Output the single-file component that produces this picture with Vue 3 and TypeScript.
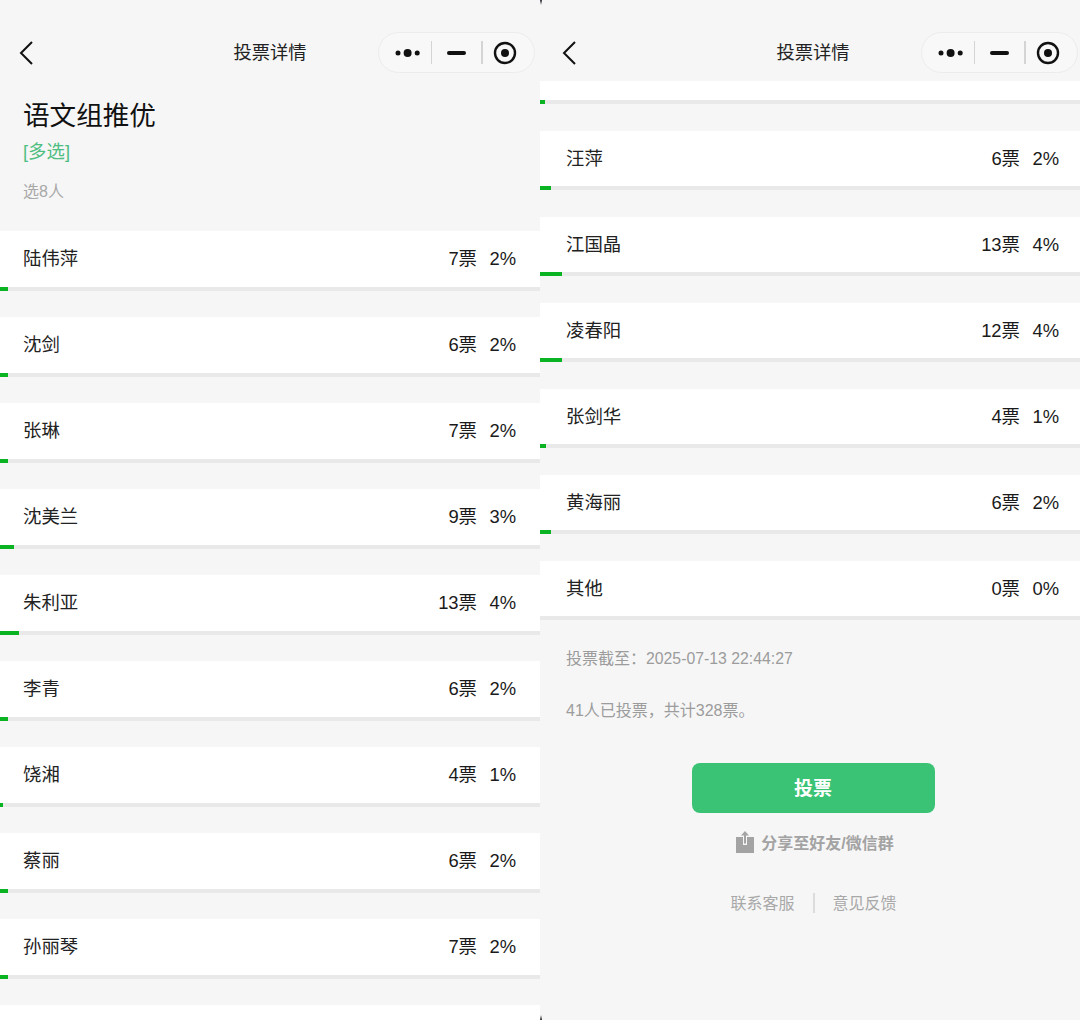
<script setup lang="ts">
interface Row { name: string; votes: number; pct: number; bar: number }
const leftRows: Row[] = [
  { name: '陆伟萍', votes: 7, pct: 2, bar: 8 },
  { name: '沈剑', votes: 6, pct: 2, bar: 8 },
  { name: '张琳', votes: 7, pct: 2, bar: 8 },
  { name: '沈美兰', votes: 9, pct: 3, bar: 14 },
  { name: '朱利亚', votes: 13, pct: 4, bar: 19 },
  { name: '李青', votes: 6, pct: 2, bar: 8 },
  { name: '饶湘', votes: 4, pct: 1, bar: 3 },
  { name: '蔡丽', votes: 6, pct: 2, bar: 8 },
  { name: '孙丽琴', votes: 7, pct: 2, bar: 8 },
]
const rightRows: Row[] = [
  { name: '汪萍', votes: 6, pct: 2, bar: 11 },
  { name: '江国晶', votes: 13, pct: 4, bar: 22 },
  { name: '凌春阳', votes: 12, pct: 4, bar: 22 },
  { name: '张剑华', votes: 4, pct: 1, bar: 6 },
  { name: '黄海丽', votes: 6, pct: 2, bar: 11 },
  { name: '其他', votes: 0, pct: 0, bar: 0 },
]
</script>

<template>
  <div class="page">
    <section class="panel">
      <header class="nav">
        <svg class="back" width="16" height="26" viewBox="0 0 16 26"><path d="M14 2 L3 13 L14 24" fill="none" stroke="#111" stroke-width="2" /></svg>
        <span class="nav-title">投票详情</span>
        <div class="capsule">
          <svg class="cap-dots" width="26" height="12" viewBox="0 0 26 12"><circle cx="3" cy="6" r="2.5" fill="#111" /><circle cx="12.6" cy="6" r="4" fill="#111" /><circle cx="22.2" cy="6" r="2.5" fill="#111" /></svg>
          <i class="cap-sep"></i>
          <span class="cap-minus"></span>
          <i class="cap-sep"></i>
          <svg class="cap-ring" width="24" height="24" viewBox="0 0 24 24"><circle cx="12" cy="12" r="10" fill="none" stroke="#111" stroke-width="2.4" /><circle cx="12" cy="12" r="4" fill="#111" /></svg>
        </div>
      </header>
      <div class="intro">
        <h1 class="title">语文组推优</h1>
        <p class="type">[多选]</p>
        <p class="hint">选8人</p>
      </div>
      <div class="list">
        <div v-for="r in leftRows" :key="r.name" class="item">
          <div class="row">
            <span class="name">{{ r.name }}</span>
            <span class="votes">{{ r.votes }}票</span>
            <span class="pct">{{ r.pct }}%</span>
          </div>
          <div class="track"><div class="fill" :style="{ width: r.bar + 'px' }"></div></div>
        </div>
        <div class="item"><div class="row"></div></div>
      </div>
    </section>

    <section class="panel right">
      <header class="nav">
        <svg class="back" width="16" height="26" viewBox="0 0 16 26"><path d="M14 2 L3 13 L14 24" fill="none" stroke="#111" stroke-width="2" /></svg>
        <span class="nav-title">投票详情</span>
        <div class="capsule">
          <svg class="cap-dots" width="26" height="12" viewBox="0 0 26 12"><circle cx="3" cy="6" r="2.5" fill="#111" /><circle cx="12.6" cy="6" r="4" fill="#111" /><circle cx="22.2" cy="6" r="2.5" fill="#111" /></svg>
          <i class="cap-sep"></i>
          <span class="cap-minus"></span>
          <i class="cap-sep"></i>
          <svg class="cap-ring" width="24" height="24" viewBox="0 0 24 24"><circle cx="12" cy="12" r="10" fill="none" stroke="#111" stroke-width="2.4" /><circle cx="12" cy="12" r="4" fill="#111" /></svg>
        </div>
      </header>
      <div class="list">
        <div class="item">
          <div class="row stub"></div>
          <div class="track"><div class="fill" style="width: 5px"></div></div>
        </div>
        <div v-for="r in rightRows" :key="r.name" class="item">
          <div class="row">
            <span class="name">{{ r.name }}</span>
            <span class="votes">{{ r.votes }}票</span>
            <span class="pct">{{ r.pct }}%</span>
          </div>
          <div class="track"><div class="fill" :style="{ width: r.bar + 'px' }"></div></div>
        </div>
      </div>
      <div class="meta">
        <p>投票截至：<span class="date">2025-07-13 22:44:27</span></p>
        <p>41人已投票，共计328票。</p>
      </div>
      <button class="vote">投票</button>
      <div class="share">
        <svg width="18" height="22" viewBox="0 0 18 22"><path d="M0 6 H7 V14 H11 V6 H18 V22 H0 Z" fill="#a3a3a3" /><path d="M9 0 L13 4.5 H10 V12.5 H8 V4.5 H5 Z" fill="#a3a3a3" /></svg>
        <span>分享至好友/微信群</span>
      </div>
      <div class="links">
        <span>联系客服</span>
        <i class="link-sep"></i>
        <span>意见反馈</span>
      </div>
    </section>
    <i class="seam seam-top"></i>
    <i class="seam seam-bottom"></i>
  </div>
</template>

<style scoped>
.page {
  position: relative;
  display: flex;
  width: 1080px;
  height: 1020px;
  overflow: hidden;
  font-family: "Liberation Sans", "Noto Sans CJK SC", sans-serif;
  color: #1a1a1a;
}
.seam {
  position: absolute;
  width: 2px;
  background: #30303a;
}
.seam-top {
  left: 540px;
  top: 0;
  height: 5px;
  clip-path: polygon(0 0, 100% 0, 50% 100%);
}
.seam-bottom {
  left: 540px;
  bottom: 0;
  height: 5px;
  clip-path: polygon(50% 0, 100% 100%, 0 100%);
}
.panel {
  width: 540px;
  height: 1020px;
  flex: none;
  overflow: hidden;
  background: #f6f6f6;
  display: flex;
  flex-direction: column;
}
.nav {
  height: 81px;
  flex: none;
  position: relative;
  display: flex;
  align-items: center;
  justify-content: center;
  padding-top: 24px;
  box-sizing: border-box;
}
.right .nav {
  left: 3px;
}
.back {
  position: absolute;
  left: 18px;
  top: 40px;
}
.nav-title {
  font-size: 18.3px;
  line-height: 56px;
  color: #222;
}
.capsule {
  position: absolute;
  right: 5px;
  top: 32px;
  width: 157px;
  height: 41px;
  box-sizing: border-box;
  border: 1px solid #ececec;
  border-radius: 21px;
  background: #f8f8f8;
  display: flex;
  align-items: center;
  padding-left: 16px;
}
.cap-sep {
  width: 1.4px;
  height: 23px;
  background: #d4d4d4;
  flex: none;
}
.cap-dots {
  margin-right: 10px;
}
.cap-minus {
  width: 19px;
  height: 4px;
  border-radius: 2px;
  background: #111;
  margin: 0 15px;
}
.cap-ring {
  margin-left: 10.5px;
}
.intro {
  height: 150px;
  flex: none;
  box-sizing: border-box;
  padding: 15px 23px 0;
}
.title {
  margin: 0;
  font-size: 26.6px;
  font-weight: 400;
  line-height: 40px;
  color: #111;
}
.type {
  margin: 0;
  font-size: 18.4px;
  line-height: 32px;
  color: #4fbe82;
}
.hint {
  margin: 10px 0 0;
  font-size: 16px;
  line-height: 28px;
  color: #a8a8a8;
}
.list {
  display: flex;
  flex-direction: column;
  gap: 26px;
}
.right .list {
  gap: 27px;
}
.row {
  height: 56px;
  box-sizing: border-box;
  background: #fff;
  display: flex;
  align-items: baseline;
  padding: 16px 24px 0 23px;
  font-size: 18.4px;
  line-height: 24px;
}
.right .row {
  height: 55px;
  padding-left: 26px;
  padding-right: 21px;
}
.right .row.stub {
  height: 19px;
  padding: 0;
}
.name {
  flex: 1;
  color: #222;
}
.pct {
  width: 39px;
  text-align: right;
}
.track {
  height: 4px;
  background: #e9e9e9;
}
.fill {
  height: 100%;
  background: #09b321;
}
.meta {
  padding: 0 26px;
  font-size: 16px;
  color: #9c9c9c;
}
.date {
  font-size: 15.8px;
}
.meta p {
  margin: 0;
  line-height: 24px;
  padding-bottom: 2px;
  padding-top: 26px;
}
.meta p:first-child {
  padding-top: 27px;
}
.vote {
  display: block;
  width: 243px;
  height: 50px;
  margin: 38px auto 0;
  padding: 0 0 3px;
  position: relative;
  left: 3px;
  border: 0;
  border-radius: 8px;
  background: #3bc375;
  color: #fff;
  font-family: inherit;
  font-size: 19px;
  font-weight: 700;
}
.share {
  display: flex;
  align-items: center;
  justify-content: center;
  gap: 7px;
  margin-top: 17px;
  padding-left: 10px;
  font-size: 16px;
  font-weight: 700;
  color: #a3a3a3;
}
.links {
  display: flex;
  align-items: center;
  justify-content: center;
  gap: 18px;
  margin-top: 36px;
  padding-left: 7px;
  font-size: 16px;
  color: #a8a8a8;
}
.link-sep {
  width: 2px;
  height: 20px;
  margin-top: 2px;
  background: #dcdcdc;
}
</style>
